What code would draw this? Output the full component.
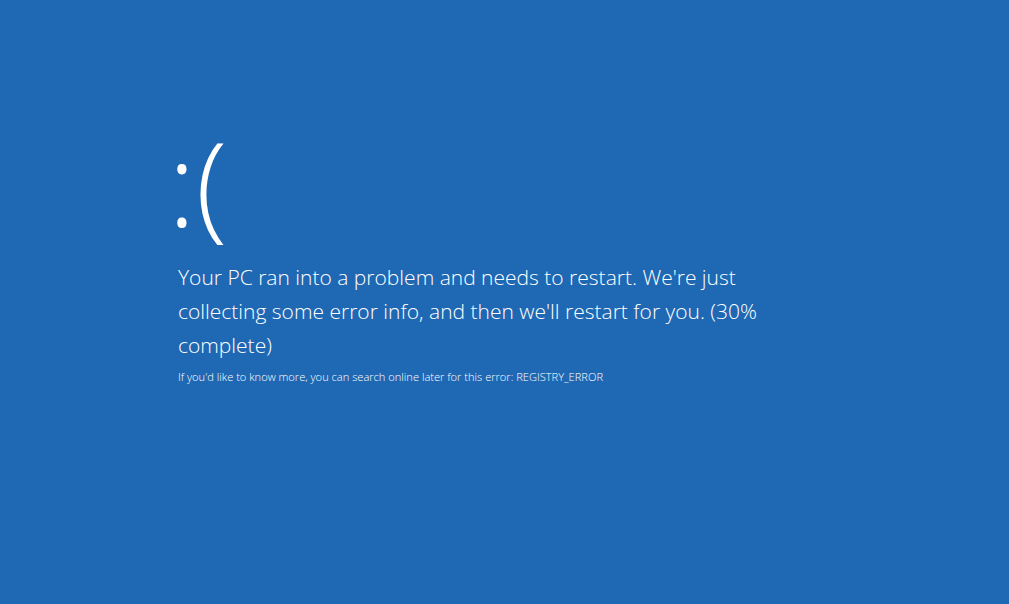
export default function App() {
  return (
    <div className="w-[1009px] h-[604px] bg-[#1f68b4] text-white font-['Open_Sans',sans-serif] overflow-hidden">
      <div className="pl-[170px] pt-[112px]">
        <div className="-ml-[2px] text-[116px] font-light leading-[140px]">:(</div>
        <p className="mt-[8px] pl-[8px] w-[610px] text-[21px] font-light leading-[34px]">
          Your PC ran into a problem and needs to restart. We're just collecting some error info, and then we'll restart for you. (30% complete)
        </p>
        <p className="mt-[7px] pl-[8px] text-[11.1px] font-light">
          If you'd like to know more, you can search online later for this error: REGISTRY_ERROR
        </p>
      </div>
    </div>
  )
}
